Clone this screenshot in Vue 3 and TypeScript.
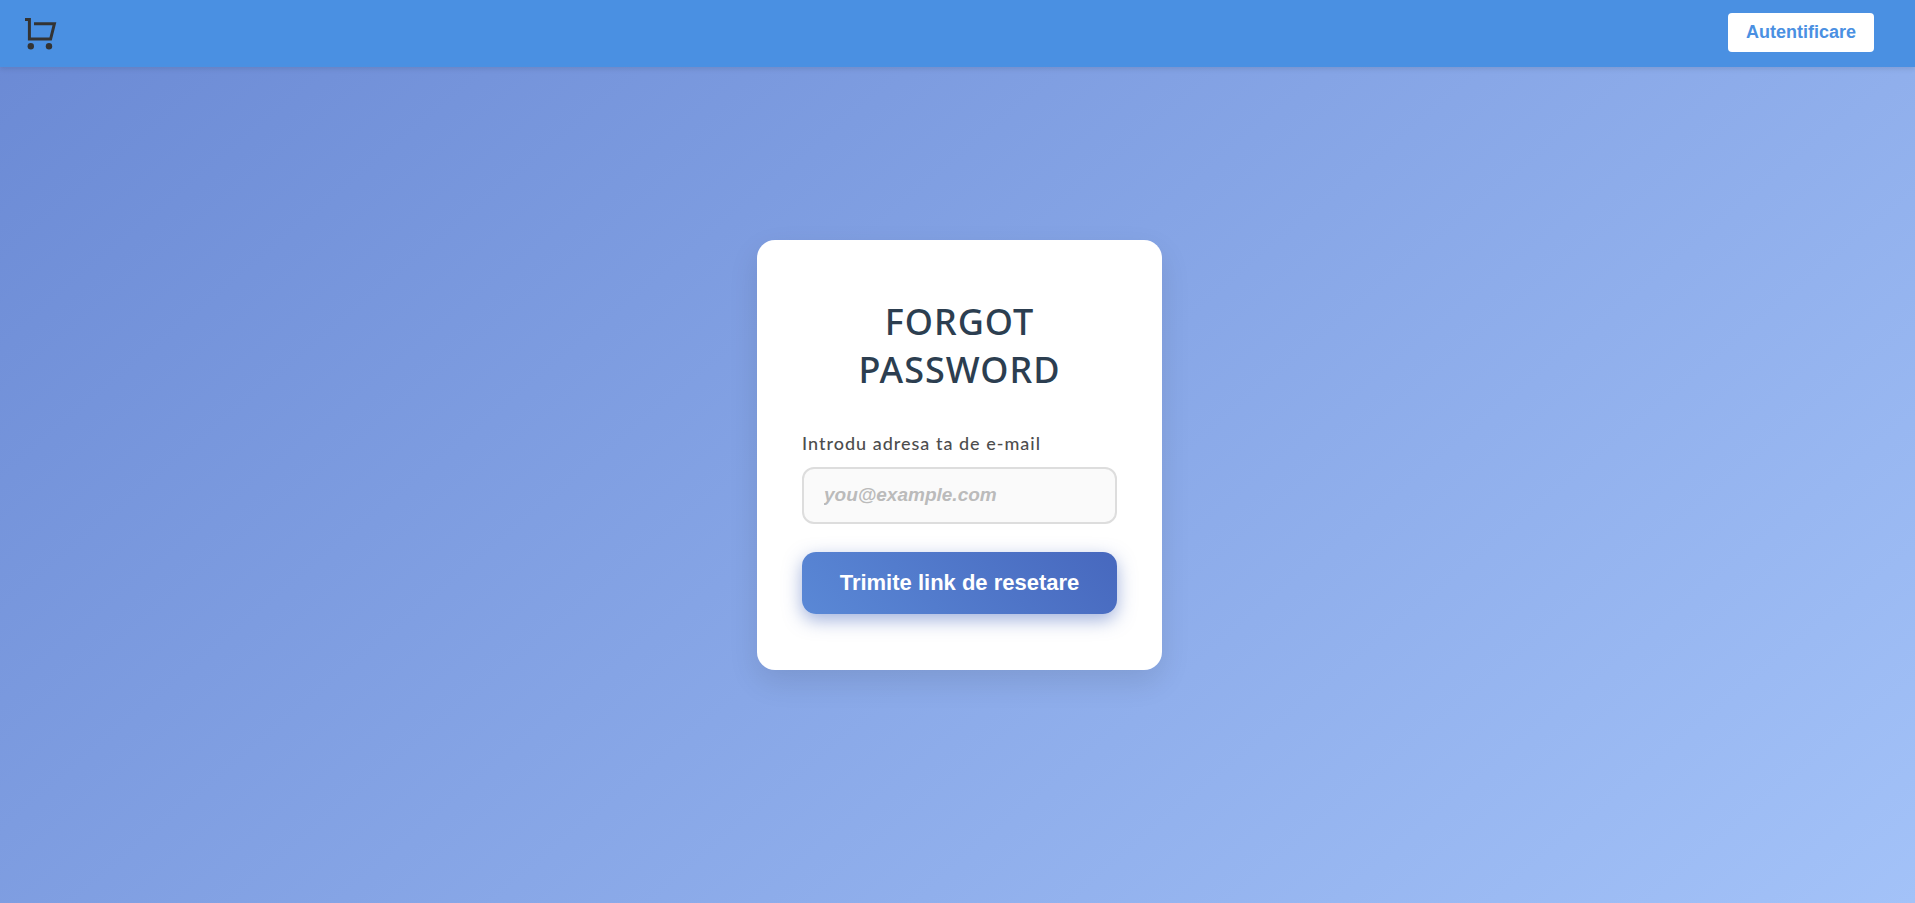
<script setup lang="ts">
import { ref } from 'vue'

const email = ref('')
const submit = (): void => {}
</script>

<template>
  <div class="page">
    <header class="topbar">
      <a class="cart" href="#" aria-label="Coș de cumpărături">
        <svg viewBox="0 0 32 33" width="32" height="33" fill="none" stroke="#333" aria-hidden="true">
          <path d="M0 1.5H4.4V21H25.6L29.4 5.8H9" stroke-width="3" />
          <circle cx="5.8" cy="28.3" r="3.2" fill="#333" stroke="none" />
          <circle cx="24" cy="28.3" r="3.2" fill="#333" stroke="none" />
        </svg>
      </a>
      <button type="button" class="login">Autentificare</button>
    </header>
    <main class="content">
      <form class="card" @submit.prevent="submit">
        <h1>FORGOT PASSWORD</h1>
        <label for="email">Introdu adresa ta de e-mail</label>
        <input id="email" v-model="email" type="email" placeholder="you@example.com" />
        <button type="submit" class="send">Trimite link de resetare</button>
      </form>
    </main>
  </div>
</template>

<style>
body {
  margin: 0;
}
</style>

<style scoped>
.page {
  display: flex;
  flex-direction: column;
  min-height: 100vh;
  background: linear-gradient(140deg, #6a89d4, #a3c2f8);
  font-family: "Noto Sans", "Open Sans", sans-serif;
}

.topbar {
  display: flex;
  align-items: flex-start;
  justify-content: space-between;
  box-sizing: border-box;
  height: 67px;
  padding: 13px 41px 0 25px;
  background: #4a90e2;
  box-shadow: 0 2px 5px rgba(0, 0, 0, 0.1);
}

.cart {
  display: flex;
  margin-top: 5px;
}

.login {
  padding: 0 18px;
  border: 0;
  border-radius: 4px;
  background: #fff;
  color: #4a90e2;
  font: bold 18px/39px "Liberation Sans", Arial, sans-serif;
  cursor: pointer;
}

.content {
  display: flex;
  flex: 1;
  align-items: center;
  justify-content: center;
  padding: 0 0 60px 4px;
}

.card {
  display: flex;
  flex-direction: column;
  box-sizing: border-box;
  width: 405px;
  max-width: 100%;
  padding: 58px 45px 56px;
  border-radius: 18px;
  background: #fff;
  box-shadow: 0 12px 30px rgba(0, 0, 0, 0.1);
}

h1 {
  margin: 0 0 36px;
  color: #2c3e50;
  font-size: 36px;
  font-weight: 500;
  line-height: 48px;
  letter-spacing: 1px;
  text-align: center;
}

label {
  margin-bottom: 10px;
  color: #4d4d4d;
  font-family: Lato, "Open Sans", sans-serif;
  font-size: 18px;
  font-weight: 500;
  line-height: 27px;
  letter-spacing: 1px;
}

input {
  box-sizing: border-box;
  width: 100%;
  height: 57px;
  margin: 0 0 28px;
  padding: 0 20px 2px;
  border: 2px solid #ddd;
  border-radius: 12px;
  background: #fafafa;
  color: #333;
  font: bold 19px "Liberation Sans", Arial, sans-serif;
}

input::placeholder {
  color: #bbb;
  font-style: italic;
  opacity: 1;
}

.send {
  height: 62px;
  border: 0;
  border-radius: 14px;
  background: linear-gradient(45deg, #5a88d6, #4768be);
  box-shadow: 0 6px 18px rgba(70, 102, 187, 0.5);
  color: #fff;
  font: bold 22px "Liberation Sans", Arial, sans-serif;
  cursor: pointer;
}
</style>
